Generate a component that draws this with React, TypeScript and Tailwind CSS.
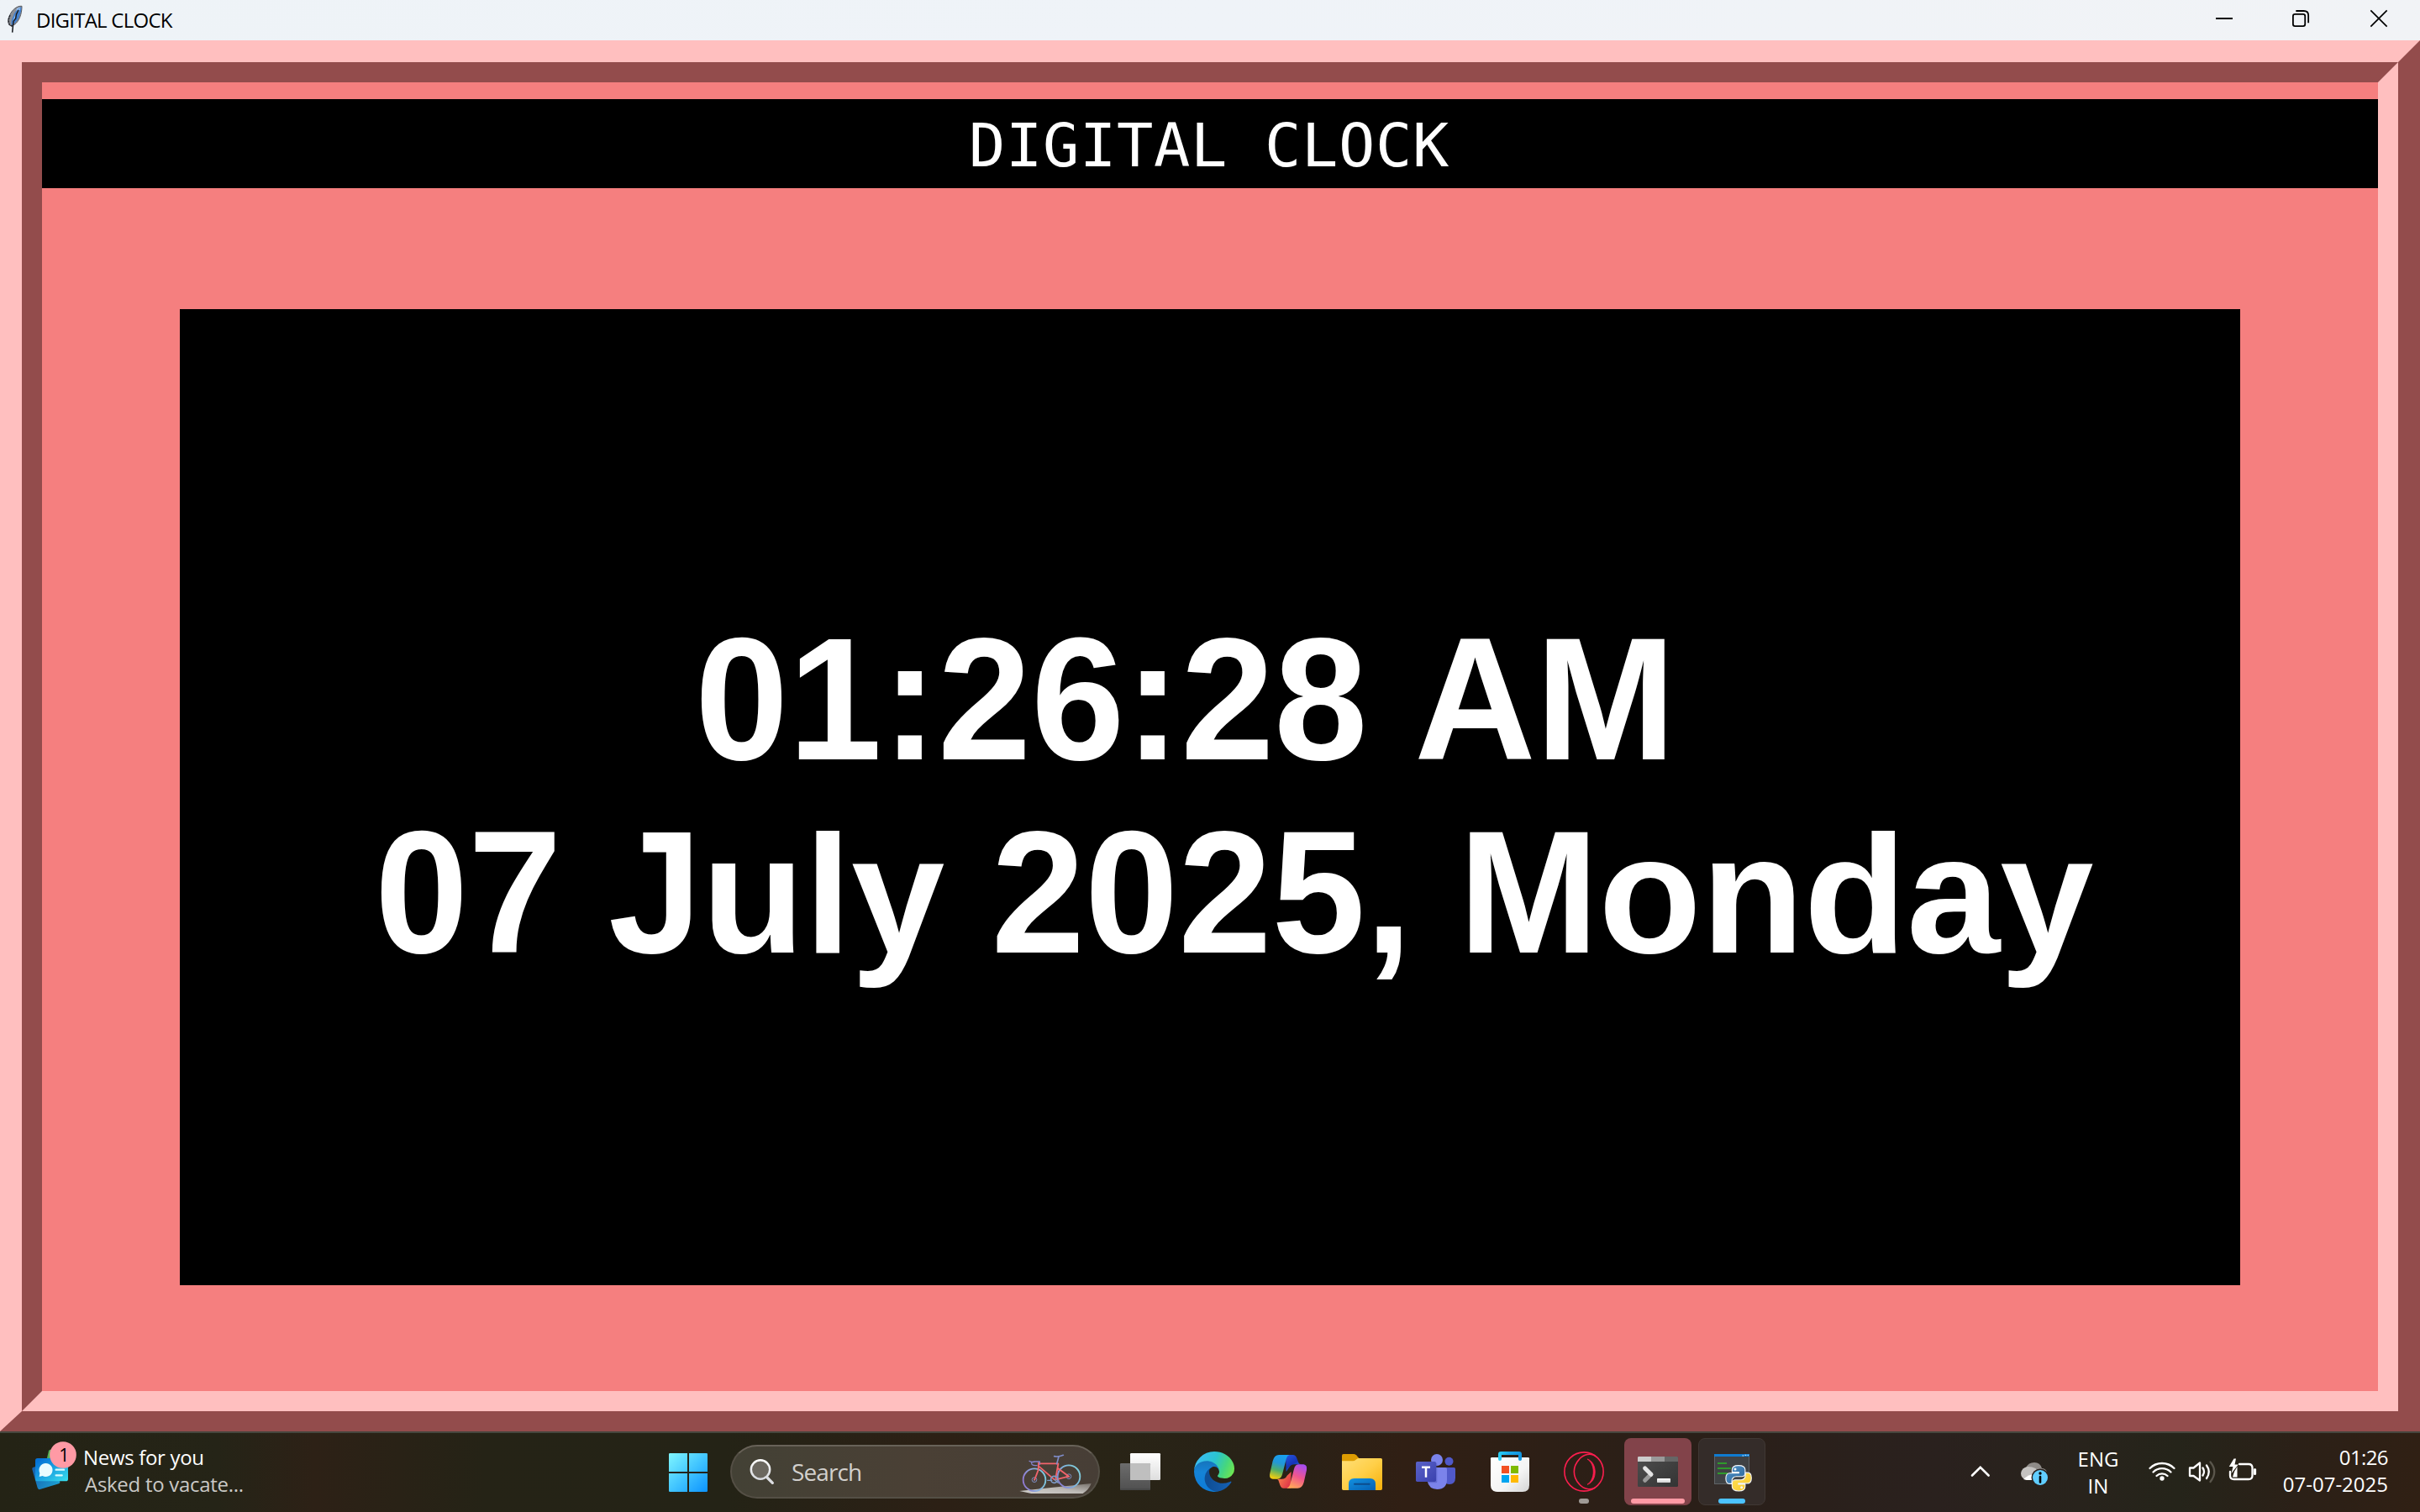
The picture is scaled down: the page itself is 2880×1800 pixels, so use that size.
import React from "react";

function FeatherIcon() {
  return (
    <svg className="ml-[8px] h-[48px] w-[20px] shrink-0" viewBox="24 0 60 144">
      <path d="M78 22 C62 20 44 34 36 52 C28 66 26 80 34 90 L42 93 L54 86 C68 74 78 52 78 22Z" fill="#8d9096" stroke="#55585e" strokeWidth="3" />
      <path d="M76 25 C62 30 54 42 48 56 C42 68 38 80 42 90 C56 82 62 74 68 60 C74 46 77 36 76 25Z" fill="#3f7fd0" />
      <path d="M74 24 L58 40 L60 30Z" fill="#9cc4f2" />
      <path d="M72 30 C60 44 50 66 46 84" stroke="#8fbdf0" strokeWidth="4" fill="none" />
      <path d="M66 36 L58 52 L56 66 L48 76 L44 116" stroke="#15181e" strokeWidth="4.5" fill="none" />
      <path d="M36 54 L30 72 L34 88 L44 94" stroke="#202328" strokeWidth="4" fill="none" strokeDasharray="7 3" />
    </svg>
  );
}

function TitleBar() {
  return (
    <header className="flex h-[48px] items-center bg-linear-to-r from-[#eef3f7] via-[#eff3f8] to-[#f1f3f6]">
      <FeatherIcon />
      <span className="ml-[15px] text-[24px] leading-[48px] tracking-[-0.76px] text-black">DIGITAL CLOCK</span>
      <div className="ml-auto flex h-full">
        <svg className="h-[48px] w-[92px]" viewBox="63 0 276 144">
          <path d="M171 66H231" stroke="#000" strokeWidth="6" />
        </svg>
        <svg className="h-[48px] w-[92px]" viewBox="339 0 276 144" fill="none" stroke="#000" strokeWidth="5.4">
          <rect x="446.700" y="50.500" width="43" height="43" rx="7" />
          <path d="M457 39 H485 Q501.500 39 501.500 55 V82" />
        </svg>
        <svg className="h-[48px] w-[95px]" viewBox="615 0 285 144">
          <path d="M724 37 L782 95 M782 37 L724 95" stroke="#000" strokeWidth="5" />
        </svg>
      </div>
    </header>
  );
}

function Tall({ children }: { children: React.ReactNode }) {
  return <span className="inline-block origin-[0_184px] scale-y-[1.035] whitespace-pre">{children}</span>;
}

function ClockWindow() {
  return (
    <main className="h-[1656px] border-t-[26px] border-r-[26px] border-b-[24px] border-l-[26px] border-t-[#ffbfbf] border-r-[#934c4c] border-b-[#934c4c] border-l-[#ffbfbf]">
      <div className="h-full border-[24px] border-t-[#934c4c] border-r-[#ffbfbf] border-b-[#ffbfbf] border-l-[#934c4c] bg-[#f57f7f] pt-[20px]">
        <h1 className="h-[106px] overflow-hidden bg-black pr-[2px] text-center font-['DejaVu_Sans_Mono',monospace] text-[72px] leading-[110px] tracking-[0.65px] text-white">
          DIGITAL CLOCK
        </h1>
        <section className="mx-[164px] mt-[144px] h-[1162px] bg-black pt-[352px] font-['Liberation_Sans',Arial,sans-serif] text-[200px] leading-[230px] font-bold whitespace-nowrap text-white">
          <div className="h-[230px] pl-[613px] [font-kerning:none]">
            <Tall>01:26:28 AM</Tall>
          </div>
          <div className="h-[230px] pl-[232px]">
            <Tall>07 J</Tall>uly <Tall>2025,</Tall> <Tall>M</Tall>onday
          </div>
        </section>
      </div>
    </main>
  );
}

function WidgetsIcon() {
  return (
    <svg className="h-[94px] w-[56px] shrink-0" viewBox="108 198 168 282">
      <defs>
        <linearGradient id="card" x1="0" y1="0" x2="1" y2="1">
          <stop offset="0.1" stopColor="#0572d6" />
          <stop offset="1" stopColor="#38e0ee" />
        </linearGradient>
        <linearGradient id="cardBack" x1="0" y1="0" x2="1" y2="0.6">
          <stop offset="0" stopColor="#1657a8" />
          <stop offset="1" stopColor="#1c9bd0" />
        </linearGradient>
      </defs>
      <path d="M174 262 Q176 256 182 258 L215 270 L205 300 H165Z" fill="#55b457" />
      <path d="M115 328 Q113 322 119 320 L190 300 L214 372 Q215 377 210 379 L143 399 Q136 401 134 394Z" fill="url(#cardBack)" />
      <rect x="126" y="288" width="117" height="82" rx="8" fill="url(#card)" />
      <path d="M163 306 A24 24 0 1 1 152 351 L140 354 L142 341 A24 24 0 0 1 163 306Z" fill="#eafcff" />
      <path d="M200 329 H228 M200 349 H221" stroke="#d8fbff" strokeWidth="7" strokeLinecap="round" />
      <circle cx="225" cy="276" r="47.500" fill="#ff9aa5" />
      <text x="211" y="299" fontSize="64" fill="#000" fontFamily="'Open Sans', sans-serif">1</text>
    </svg>
  );
}

function Widgets() {
  return (
    <div className="flex h-full w-[775px] pl-[36px]">
      <WidgetsIcon />
      <div className="ml-[7px] pt-[13px] text-[24px] leading-[32px]">
        <div className="tracking-[-0.32px] text-white">News for you</div>
        <div className="pl-[2px] tracking-[-0.29px] text-[#c9c8c5]">Asked to vacate...</div>
      </div>
    </div>
  );
}

function StartIcon() {
  return (
    <svg className="h-[94px] w-[88px]" viewBox="-15 18 264 282">
      <defs>
        <linearGradient id="win" gradientUnits="userSpaceOnUse" x1="48" y1="90" x2="186" y2="228">
          <stop offset="0" stopColor="#80f6ff" />
          <stop offset="0.5" stopColor="#43c6ff" />
          <stop offset="1" stopColor="#0c93ff" />
        </linearGradient>
      </defs>
      <g fill="url(#win)">
        <path d="M52 90H114V156H48V94Q48 90 52 90Z" />
        <path d="M120 90H182Q186 90 186 94V156H120Z" />
        <path d="M48 162H114V228H52Q48 228 48 224Z" />
        <path d="M120 162H186V224Q186 228 182 228H120Z" />
      </g>
    </svg>
  );
}

function Wheel({ cx, cy, fill }: { cx: number; cy: number; fill: string }) {
  return (
    <g fill="none">
      <circle cx={cx} cy={cy} r="40" stroke={fill} strokeWidth="5.500" />
      <circle cx={cx} cy={cy} r="8.500" stroke="#7f8fc4" strokeWidth="3" />
      <circle cx={cx} cy={cy} r="2.500" fill="#9db8e8" />
    </g>
  );
}

function BikeIcon() {
  return (
    <svg className="h-[62px] w-[90px]" viewBox="216 63 270 186">
      <defs>
        <linearGradient id="wheelA" x1="0" y1="0.6" x2="1" y2="0.4">
          <stop offset="0" stopColor="#8f78d0" />
          <stop offset="0.5" stopColor="#8aa8dc" />
          <stop offset="1" stopColor="#7cc8dc" />
        </linearGradient>
        <linearGradient id="wheelB" x1="0" y1="0.8" x2="1" y2="0.2">
          <stop offset="0" stopColor="#8b7ad0" />
          <stop offset="0.5" stopColor="#7fb4dc" />
          <stop offset="1" stopColor="#80d0dc" />
        </linearGradient>
        <linearGradient id="shade" x1="0" y1="1" x2="1" y2="0">
          <stop offset="0" stopColor="#d0cecb" />
          <stop offset="0.5" stopColor="#bdbab6" />
          <stop offset="1" stopColor="#77716b" />
        </linearGradient>
      </defs>
      <path d="M220 225 L476 198 Q468 220 446 234 H262Z" fill="url(#shade)" />
      <Wheel cx={273} cy={185} fill="url(#wheelA)" />
      <Wheel cx={396} cy={173} fill="url(#wheelB)" />
      <g fill="none" strokeLinecap="round" strokeLinejoin="round">
        <path d="M289 127 H358 M289 137 L344 184 M358 128 L349 180 M357 144 L396 173 L350 184 M288 124 L287 150 L274 184" stroke="#f2646c" strokeWidth="5.500" />
        <path d="M353 128 L360 102 M344 101 Q360 104 376 97" stroke="#7f8cc8" strokeWidth="5" />
        <path d="M255 118 Q262 124 274 120 H292 V130 M263 124 Q262 134 276 134 H282" stroke="#8583cc" strokeWidth="4" />
        <circle cx="344" cy="184" r="12" stroke="#7d9cc8" strokeWidth="5" />
        <path d="M320 187 H336 M344 184 L358 196" stroke="#7d9cc8" strokeWidth="4" />
      </g>
    </svg>
  );
}

function SearchBox() {
  return (
    <div className="mt-[14px] mr-[4px] ml-[6px] flex h-[64px] w-[440px] items-center rounded-full border-2 border-[#544f45] border-t-[#686258] bg-linear-to-r from-[#434135] via-[#4a4035] to-[#473e36]">
      <svg className="ml-[18px] h-[40px] w-[36px]" viewBox="327 96 108 120">
        <defs>
          <linearGradient id="lens" x1="0" y1="0" x2="0" y2="1">
            <stop offset="0" stopColor="#fff" />
            <stop offset="1" stopColor="#d6d8dd" />
          </linearGradient>
        </defs>
        <path d="M399 177 L418 196" stroke="#dcdde1" strokeWidth="10" strokeLinecap="round" />
        <circle cx="375" cy="148.500" r="33.500" fill="#6b675f" stroke="url(#lens)" strokeWidth="7.500" />
      </svg>
      <span className="ml-[17px] text-[28px] leading-[60px] tracking-[-0.9px] text-[#d2d0cd]">Search</span>
      <div className="mr-[5px] ml-auto">
        <BikeIcon />
      </div>
    </div>
  );
}

function TaskViewIcon() {
  return (
    <svg className="h-[94px] w-[88px]" viewBox="519 18 264 282">
      <defs>
        <linearGradient id="tvw" x1="0" y1="0" x2="0" y2="1">
          <stop offset="0" stopColor="#ffffff" />
          <stop offset="1" stopColor="#dedede" />
        </linearGradient>
        <linearGradient id="tvg" x1="0" y1="0" x2="0" y2="1">
          <stop offset="0" stopColor="#6c6c6c" />
          <stop offset="1" stopColor="#505050" />
        </linearGradient>
      </defs>
      <rect x="615" y="90" width="108" height="96" rx="4" fill="url(#tvw)" />
      <rect x="579" y="126" width="108" height="96" rx="4" fill="url(#tvg)" />
      <rect x="615" y="126" width="72" height="60" fill="#bfbfbf" />
      <path d="M580 219H686" stroke="#474747" strokeWidth="5" />
    </svg>
  );
}

function EdgeIcon() {
  return (
    <svg className="h-[94px] w-[88px]" viewBox="783 18 264 282">
      <defs>
        <linearGradient id="eA" x1="0.2" y1="0.5" x2="1" y2="0.6">
          <stop offset="0" stopColor="#0f4f96" />
          <stop offset="1" stopColor="#1560b4" />
        </linearGradient>
        <linearGradient id="eB" x1="0.4" y1="0" x2="0.4" y2="1">
          <stop offset="0" stopColor="#1672b8" />
          <stop offset="0.4" stopColor="#1583d6" />
          <stop offset="1" stopColor="#0c7bd8" />
        </linearGradient>
        <linearGradient id="eC" x1="0" y1="0.4" x2="1" y2="0.7">
          <stop offset="0" stopColor="#3bbcf4" />
          <stop offset="0.45" stopColor="#2bc3cf" />
          <stop offset="0.75" stopColor="#45d67f" />
          <stop offset="1" stopColor="#6fe650" />
        </linearGradient>
      </defs>
      <g transform="translate(843 84) scale(0.5625)">
        <path d="M231 190.500a93.730 93.730 0 0 1-10.540 4.710 101.870 101.870 0 0 1-35.900 6.460c-47.320 0-88.540-32.550-88.540-74.320A31.480 31.480 0 0 1 112.460 100c-42.800 1.800-53.800 46.400-53.800 72.530 0 73.880 68.090 81.370 82.760 81.370 7.910 0 19.840-2.300 27-4.560l1.310-.440a128.340 128.340 0 0 0 66.600-52.800 4 4 0 0 0-5.330-5.600z" fill="url(#eA)" />
        <path d="M105.730 241.420A79.200 79.200 0 0 1 83 220.080a80.720 80.720 0 0 1 29.500-120c3.120-1.470 8.450-4.130 15.540-4a32.350 32.350 0 0 1 25.690 13 31.880 31.880 0 0 1 6.360 18.660c0-.210 24.460-79.600-80-79.600-43.900 0-80 41.660-80 78.210a130.150 130.150 0 0 0 12.110 56 128 128 0 0 0 156.380 67.110 75.550 75.550 0 0 1-62.780-8z" fill="url(#eB)" />
        <path d="M152.330 148.860c-.810 1.050-3.300 2.500-3.300 5.660 0 2.610 1.700 5.120 4.720 7.230 14.380 10 41.490 8.680 41.560 8.680a59.560 59.560 0 0 0 30.270-8.350A61.380 61.380 0 0 0 256 109.190c.260-22.410-8-37.310-11.340-43.910C223.460 23.840 177.720 0 128 0A128 128 0 0 0 0 126.200c.480-36.540 36.800-66.050 80-66.050 3.500 0 23.460.340 42 10.070 16.340 8.580 24.900 18.940 30.850 29.210 6.180 10.670 7.280 24.150 7.280 29.520s-2.740 13.330-7.800 19.910z" fill="url(#eC)" />
      </g>
    </svg>
  );
}

function CopilotIcon() {
  return (
    <svg className="h-[94px] w-[88px]" viewBox="-3 18 264 282">
      <defs>
        <linearGradient id="cA" x1="0.6" y1="0" x2="0.35" y2="1">
          <stop offset="0" stopColor="#18a0f0" />
          <stop offset="0.35" stopColor="#2397d8" />
          <stop offset="0.65" stopColor="#4fae6a" />
          <stop offset="1" stopColor="#f0cc10" />
        </linearGradient>
        <linearGradient id="cB" x1="0.2" y1="0" x2="0.8" y2="1">
          <stop offset="0" stopColor="#2450d8" />
          <stop offset="0.5" stopColor="#1634b8" />
          <stop offset="1" stopColor="#2a8cf0" />
        </linearGradient>
        <linearGradient id="cC" x1="0.7" y1="0" x2="0.3" y2="1">
          <stop offset="0" stopColor="#a84cf0" />
          <stop offset="0.5" stopColor="#f0568c" />
          <stop offset="1" stopColor="#ffa858" />
        </linearGradient>
        <linearGradient id="cD" x1="0" y1="0" x2="1" y2="0.6">
          <stop offset="0" stopColor="#ff9a50" />
          <stop offset="1" stopColor="#e03848" />
        </linearGradient>
      </defs>
      <path d="M120 96 H146 Q156 96 160 108 L166 124 Q168 130 176 130 H152 Q138 130 132 142 L122 156Z" fill="url(#cB)" />
      <path d="M138 215 H112 Q104 215 100 204 L94 186 Q92 182 84 182 H106 Q120 182 125 170 L140 156Z" fill="url(#cD)" />
      <path d="M96 96 H134 Q126 98 123 108 L108 166 Q104 182 90 182 H74 Q60 180 64 162 L74 118 Q80 96 96 96Z" fill="url(#cA)" />
      <path d="M163 215 H124 Q132 213 135 204 L150 146 Q154 130 168 130 H184 Q198 132 195 150 L185 194 Q179 215 163 215Z" fill="url(#cC)" />
    </svg>
  );
}

function ExplorerIcon() {
  return (
    <svg className="h-[94px] w-[88px]" viewBox="261 18 264 282">
      <defs>
        <linearGradient id="fA" x1="0" y1="0" x2="1" y2="1">
          <stop offset="0" stopColor="#ffdf78" />
          <stop offset="0.5" stopColor="#ffcf48" />
          <stop offset="1" stopColor="#f6b00a" />
        </linearGradient>
        <linearGradient id="fB" x1="0" y1="0" x2="1" y2="1">
          <stop offset="0" stopColor="#1392e0" />
          <stop offset="1" stopColor="#0560b4" />
        </linearGradient>
      </defs>
      <path d="M321 98 Q321 93 326 93 H362 Q368 93 372 97 L384 110 L366 130 H321Z" fill="#dd9c02" />
      <path d="M321 118 H360 Q366 118 370 114 L374 111 Q377 108 382 108 H460 Q465 108 465 113 V217 Q465 222 460 222 H326 Q321 222 321 217Z" fill="url(#fA)" />
      <path d="M345 222 V200 Q345 180 365 180 H421 Q441 180 441 200 V222Z" fill="url(#fB)" />
      <path d="M366 200.500H419" stroke="#0c4c8c" strokeWidth="6" strokeLinecap="round" />
    </svg>
  );
}

function TeamsIcon() {
  return (
    <svg className="h-[94px] w-[88px]" viewBox="525 18 264 282">
      <defs>
        <linearGradient id="tA" x1="0" y1="0" x2="1" y2="1">
          <stop offset="0" stopColor="#5a62c8" />
          <stop offset="1" stopColor="#3a41ae" />
        </linearGradient>
      </defs>
      <circle cx="660" cy="114" r="21" fill="#7b83eb" />
      <circle cx="703.500" cy="119.500" r="15" fill="#5059c9" />
      <path d="M690 141 H721 Q726 141 726 146 V178 Q726 201 705 201 Q690 201 686 190Z" fill="#5059c9" />
      <path d="M650 141 H690 Q696 141 696 147 V184 Q696 219 661 219 Q632 219 626 190 L640 150Z" fill="#7b83eb" />
      <rect x="628" y="124" width="33" height="72" rx="5" fill="#4a50b4" opacity="0.45" />
      <rect x="585" y="120" width="72" height="72" rx="5" fill="url(#tA)" />
      <path d="M606 140H636 M621 140V176" stroke="#fff" strokeWidth="7.500" />
    </svg>
  );
}

function StoreIcon() {
  return (
    <svg className="h-[94px] w-[88px]" viewBox="789 18 264 282">
      <defs>
        <linearGradient id="sA" x1="0" y1="0" x2="1" y2="1">
          <stop offset="0" stopColor="#ffffff" />
          <stop offset="0.6" stopColor="#f4f4f4" />
          <stop offset="1" stopColor="#d4d4d4" />
        </linearGradient>
        <linearGradient id="sB" x1="0" y1="0" x2="1" y2="0">
          <stop offset="0" stopColor="#2bd0f4" />
          <stop offset="0.5" stopColor="#1aa6e8" />
          <stop offset="1" stopColor="#1394de" />
        </linearGradient>
      </defs>
      <path d="M852 109 Q852 105 856 105 H986 Q990 105 990 109 V204 Q990 228 966 228 H876 Q852 228 852 204Z" fill="url(#sA)" />
      <path d="M879 112 V94 Q879 84 889 84 H953 Q963 84 963 94 V112 Q963 117 957 117 Q951 117 951 112 V96 H891 V112 Q891 117 885 117 Q879 117 879 112Z" fill="url(#sB)" />
      <rect x="891" y="135" width="27" height="27" fill="#f25022" />
      <rect x="924" y="135" width="27" height="27" fill="#7fba00" />
      <rect x="891" y="168" width="27" height="27" fill="#00a4ef" />
      <rect x="924" y="168" width="27" height="27" fill="#ffb900" />
    </svg>
  );
}

function OperaIcon() {
  return (
    <svg className="h-[94px] w-[88px]" viewBox="33 18 264 282">
      <g fill="none" stroke="#fa1e4e" strokeWidth="4.800">
        <circle cx="165" cy="156" r="69.500" />
        <path d="M205 99 C190 90 165 92 148 112 C124 138 124 174 148 200 C165 220 190 222 205 213" />
      </g>
      <path d="M177 111 C213 122 215 190 177 202 C206 184 206 128 177 111Z" fill="#fa1e4e" stroke="#fa1e4e" strokeWidth="2.500" />
      <rect x="147" y="252" width="36" height="18" rx="9" fill="#9f9a96" />
    </svg>
  );
}

function TerminalIcon() {
  return (
    <svg className="h-[94px] w-[88px]" viewBox="297 18 264 282">
      <defs>
        <linearGradient id="pA" x1="0" y1="0" x2="1" y2="1">
          <stop offset="0" stopColor="#4e4e4e" />
          <stop offset="1" stopColor="#343434" />
        </linearGradient>
        <linearGradient id="pB" x1="0" y1="0" x2="0" y2="1">
          <stop offset="0" stopColor="#fff" />
          <stop offset="1" stopColor="#cfcfcf" />
        </linearGradient>
      </defs>
      <rect x="309" y="36" width="240" height="240" rx="24" fill="#82434a" />
      <rect x="357" y="102" width="144" height="108" rx="4" fill="url(#pA)" />
      <path d="M357 120V106Q357 102 361 102H405V120Z" fill="#cccccc" />
      <rect x="405" y="102" width="48" height="18" fill="#999999" />
      <path d="M453 102H497Q501 102 501 106V120H453Z" fill="#666666" />
      <path d="M404 166 L383 187" stroke="#9a9a9a" strokeWidth="15" strokeLinecap="round" />
      <path d="M383 144 L405 166" stroke="#e4e4e4" strokeWidth="15" strokeLinecap="round" />
      <rect x="426" y="180" width="48" height="15" rx="2" fill="url(#pB)" />
      <rect x="333" y="252" width="192" height="18" rx="9" fill="#ff9aa5" />
    </svg>
  );
}

function PythonIcon() {
  return (
    <svg className="h-[94px] w-[88px]" viewBox="561 18 264 282">
      <defs>
        <linearGradient id="yA" x1="0" y1="0" x2="1" y2="1">
          <stop offset="0" stopColor="#4f94cc" />
          <stop offset="1" stopColor="#2c6496" />
        </linearGradient>
        <linearGradient id="yB" x1="0" y1="0" x2="1" y2="1">
          <stop offset="0" stopColor="#ffe15a" />
          <stop offset="1" stopColor="#f8c928" />
        </linearGradient>
      </defs>
      <rect x="574.500" y="37.500" width="237" height="237" rx="22.500" fill="#342c29" stroke="#403834" strokeWidth="3" />
      <rect x="631.500" y="94.500" width="123" height="105" fill="#404244" stroke="#5f6366" strokeWidth="3" />
      <rect x="630" y="93" width="126" height="9" fill="#0f7bd0" />
      <path d="M731 99H735 M739 97H745 M749 97H753" stroke="#a8d4f6" strokeWidth="4" />
      <path d="M642 126H675 M642 144H690 M642 162H678" stroke="#2f9a2b" strokeWidth="6" />
      <g transform="translate(670 132) scale(0.86)" stroke="#f4f6f8" strokeWidth="4" strokeLinejoin="round">
        <path d="M54 2 C30 2 28 12 28 20 V30 H56 V34 H18 C8 34 2 42 2 56 C2 70 8 78 17 78 H27 V66 C27 56 35 48 45 48 H68 C76 48 82 42 82 34 V20 C82 8 72 2 54 2Z" fill="url(#yA)" />
        <path d="M56 108 C80 108 82 98 82 90 V80 H54 V76 H92 C102 76 108 68 108 54 C108 40 102 32 93 32 H83 V44 C83 54 75 62 65 62 H42 C34 62 28 68 28 76 V90 C28 102 38 108 56 108Z" fill="url(#yB)" />
      </g>
      <circle cx="705" cy="147" r="4.500" fill="#f4f6f8" />
      <circle cx="728" cy="212" r="4.500" fill="#f4f6f8" />
      <rect x="645" y="252" width="96" height="18" rx="9" fill="#4cc2ff" />
    </svg>
  );
}

function Tray() {
  return (
    <div className="ml-auto flex h-full text-[24px] leading-[32px] text-white">
      <svg className="h-[94px] w-[64px]" viewBox="5 66 64 94">
        <path d="M27 116.500 L36.800 106.800 L46.600 116.500" fill="none" stroke="#fff" strokeWidth="2.600" strokeLinecap="round" />
      </svg>
      <svg className="h-[94px] w-[76px]" viewBox="69 66 76 94">
        <path d="M91 107 Q94 101 101 101 Q108 101 110 108 Q114 108 116 112 L108 118Z" fill="#8f8b88" />
        <path d="M93 106 Q104 106 108 114 L100 122 H92 Q85 120 85 114 Q86 107 93 106Z" fill="#c4c2c0" />
        <path d="M88 121 Q94 115 101 115 V122 H92Z" fill="#fff" />
        <circle cx="108" cy="119" r="10.500" fill="#2a221f" />
        <circle cx="108" cy="119" r="9" fill="#60cdff" />
        <path d="M108 118V124.500" stroke="#000" strokeWidth="2.600" strokeLinecap="round" />
        <circle cx="108" cy="114" r="1.700" fill="#000" />
      </svg>
      <div className="w-[64px] pt-[15px] text-center">
        <div>ENG</div>
        <div>IN</div>
      </div>
      <svg className="h-[94px] w-[176px]" viewBox="209 66 176 94" fill="none" stroke="#fff" strokeWidth="2.300" strokeLinecap="round">
        <circle cx="253" cy="120" r="2.700" fill="#fff" stroke="none" />
        <path d="M238.500 108 A20.500 20.500 0 0 1 267.500 108 M242.500 112.500 A15 15 0 0 1 263.500 112.500 M246.500 117 A9.200 9.200 0 0 1 259.500 117" />
        <path d="M286 107.500 H290.500 L298 101.500 V122.500 L290.500 117 H286Z" strokeLinejoin="round" />
        <path d="M301.500 107.500 Q304.500 112 301.500 116.500 M306 104.500 Q311.500 112 306 120" />
        <path d="M310.500 100.500 Q320 112 310.500 124" stroke="#5a564c" />
        <path d="M345 103 H356 Q360.500 103 360.500 107.500 V116.500 Q360.500 121 356 121 H338.500 Q334 121 334 116.500 V112" />
        <path d="M363.500 109.500V114.500" strokeWidth="3.200" />
        <path d="M342.500 106 V118.500 H337 L339 112Z" fill="#fff" stroke="none" />
        <path d="M338.500 96.500 L332.800 106 H337.500 L335.500 114 L343.800 103.500 H339.500 L341 96.500Z" fill="#fff" stroke="none" />
      </svg>
      <div className="w-[137px] pt-[13px] text-right">
        <div className="tracking-[-0.6px]">01:26</div>
        <div>07-07-2025</div>
      </div>
    </div>
  );
}

function Taskbar() {
  return (
    <footer className="flex h-[96px] border-t-2 border-[#47463e] bg-[linear-gradient(90deg,#242315_0%,#252417_9%,#2d2116_13%,#252316_20%,#242316_30%,#2c2015_39%,#292416_45%,#282217_52%,#301f14_58%,#2a1f18_70%,#2a211e_80%,#28231c_86%,#25241a_90%,#2b2017_95%,#302014_100%)]">
      <Widgets />
      <StartIcon />
      <SearchBox />
      <TaskViewIcon />
      <EdgeIcon />
      <CopilotIcon />
      <ExplorerIcon />
      <TeamsIcon />
      <StoreIcon />
      <OperaIcon />
      <TerminalIcon />
      <PythonIcon />
      <div className="ml-auto h-full pr-[38px]">
        <Tray />
      </div>
    </footer>
  );
}

export default function App() {
  return (
    <div className="h-[1800px] w-[2880px] overflow-hidden font-['Open_Sans','Noto_Sans',sans-serif]">
      <TitleBar />
      <ClockWindow />
      <Taskbar />
    </div>
  );
}
